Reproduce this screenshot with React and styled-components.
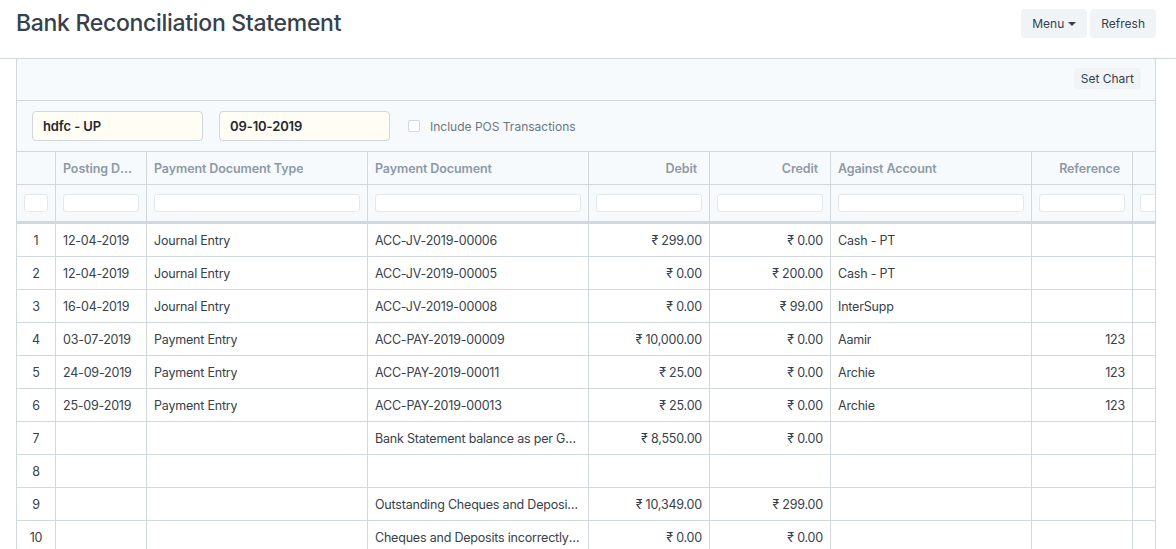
import styled, { createGlobalStyle } from "styled-components";

const GlobalStyle = createGlobalStyle`
  body {
    margin: 0;
    background: #fff;
    font-family: Inter, "Noto Sans", "DejaVu Sans", sans-serif;
    color: #36414c;
  }
`;

const COLS = "39px 91px 221px 221px 121px 121px 201px 101px 120px";

const columns = [
  { label: "", align: "center" },
  { label: "Posting Date" },
  { label: "Payment Document Type" },
  { label: "Payment Document" },
  { label: "Debit", align: "right" },
  { label: "Credit", align: "right" },
  { label: "Against Account" },
  { label: "Reference", align: "right" },
  { label: "" },
];

const rows = [
  ["1", "12-04-2019", "Journal Entry", "ACC-JV-2019-00006", "₹ 299.00", "₹ 0.00", "Cash - PT", ""],
  ["2", "12-04-2019", "Journal Entry", "ACC-JV-2019-00005", "₹ 0.00", "₹ 200.00", "Cash - PT", ""],
  ["3", "16-04-2019", "Journal Entry", "ACC-JV-2019-00008", "₹ 0.00", "₹ 99.00", "InterSupp", ""],
  ["4", "03-07-2019", "Payment Entry", "ACC-PAY-2019-00009", "₹ 10,000.00", "₹ 0.00", "Aamir", "123"],
  ["5", "24-09-2019", "Payment Entry", "ACC-PAY-2019-00011", "₹ 25.00", "₹ 0.00", "Archie", "123"],
  ["6", "25-09-2019", "Payment Entry", "ACC-PAY-2019-00013", "₹ 25.00", "₹ 0.00", "Archie", "123"],
  ["7", "", "", "Bank Statement balance as per General Ledger", "₹ 8,550.00", "₹ 0.00", "", ""],
  ["8", "", "", "", "", "", "", ""],
  ["9", "", "", "Outstanding Cheques and Deposits to clear", "₹ 10,349.00", "₹ 299.00", "", ""],
  ["10", "", "", "Cheques and Deposits incorrectly cleared", "₹ 0.00", "₹ 0.00", "", ""],
];

const PageHead = styled.header`
  display: flex;
  align-items: center;
  justify-content: space-between;
  padding: 9px 20px 20px 16px;
  border-bottom: 1px solid #d1d8dd;
`;

const Title = styled.h1`
  margin: 0;
  font-size: 23px;
  line-height: 29px;
  font-weight: 500;
  color: #36414c;
  letter-spacing: -0.3px;
`;

const Actions = styled.div`
  display: flex;
  gap: 3px;
`;

const Button = styled.button`
  display: flex;
  align-items: center;
  gap: 4px;
  height: ${({ small }) => (small ? "21px" : "29px")};
  padding: 0 ${({ small }) => (small ? "7px" : "11px")};
  border: none;
  border-radius: 4px;
  background: #f0f4f7;
  color: #36414c;
  font-family: inherit;
  font-size: 12px;
`;

const Caret = styled.span`
  width: 0;
  height: 0;
  border-left: 4px solid transparent;
  border-right: 4px solid transparent;
  border-top: 4px solid #36414c;
`;

const Report = styled.section`
  margin: 0 20px 0 16px;
  border-left: 1px solid #d1d8dd;
  border-right: 1px solid #d1d8dd;
  overflow: hidden;
`;

const Toolbar = styled.div`
  display: flex;
  justify-content: flex-end;
  align-items: center;
  height: 42px;
  padding: 0 14px 2px;
  background: #f7fafc;
  border-bottom: 1px solid #d1d8dd;
  box-sizing: border-box;
`;

const Filters = styled.div`
  display: flex;
  align-items: center;
  gap: 16px;
  height: 51px;
  padding: 0 15px;
  background: #f7fafc;
  border-bottom: 1px solid #d1d8dd;
  box-sizing: border-box;
`;

const FilterInput = styled.div`
  width: 171px;
  height: 30px;
  box-sizing: border-box;
  padding: 0 10px;
  display: flex;
  align-items: center;
  background: #fffdf4;
  border: 1px solid #d1d8dd;
  border-radius: 4px;
  font-size: 13px;
  font-weight: 600;
  color: #1f272e;
  letter-spacing: -0.1px;
`;

const CheckLabel = styled.label`
  display: flex;
  align-items: center;
  gap: 10px;
  margin-left: 2px;
  font-size: 12px;
  color: #6c7680;
`;

const Box = styled.span`
  width: 10px;
  height: 10px;
  border: 1px solid #d1d8dd;
  border-radius: 2px;
  background: #fff;
`;

const Row = styled.div`
  display: grid;
  grid-template-columns: ${COLS};
  height: ${({ h }) => h}px;
  background: ${({ head }) => (head ? "#f7fafc" : "#fff")};
  border-bottom: ${({ thick }) => (thick ? "3px" : "1px")} solid #d1d8dd;
  box-sizing: content-box;
`;

const Cell = styled.div`
  display: flex;
  align-items: center;
  justify-content: ${({ align }) =>
    align === "right" ? "flex-end" : align === "center" ? "center" : "flex-start"};
  padding: 0 ${({ head }) => (head ? "12px" : "7px")} 0 7px;
  border-right: 1px solid #d1d8dd;
  font-size: 12.5px;
  letter-spacing: ${({ head }) => (head ? "-0.1px" : "-0.2px")};
  font-weight: ${({ head }) => (head ? 600 : 400)};
  color: ${({ head }) => (head ? "#8d99a6" : "#36414c")};
  min-width: 0;
  overflow: hidden;
`;

const Text = styled.span`
  white-space: nowrap;
  overflow: hidden;
  text-overflow: ellipsis;
`;

const FilterBox = styled.div`
  width: 100%;
  height: 18px;
  box-sizing: border-box;
  background: #fff;
  border: 1px solid #e3e8ec;
  border-radius: 3px;
`;

const FilterCell = styled.div`
  display: flex;
  align-items: center;
  padding: 0 7px;
  border-right: 1px solid #d1d8dd;
`;

export default function App() {
  return (
    <>
      <GlobalStyle />
      <PageHead>
        <Title>Bank Reconciliation Statement</Title>
        <Actions>
          <Button>
            Menu <Caret />
          </Button>
          <Button>Refresh</Button>
        </Actions>
      </PageHead>
      <Report>
        <Toolbar>
          <Button small>Set Chart</Button>
        </Toolbar>
        <Filters>
          <FilterInput>hdfc - UP</FilterInput>
          <FilterInput>09-10-2019</FilterInput>
          <CheckLabel>
            <Box />
            Include POS Transactions
          </CheckLabel>
        </Filters>
        <Row head h={32}>
          {columns.map((c, i) => (
            <Cell head key={i} align={c.align}>
              <Text>{c.label}</Text>
            </Cell>
          ))}
        </Row>
        <Row head thick h={36}>
          {columns.map((c, i) => (
            <FilterCell key={i}>
              <FilterBox />
            </FilterCell>
          ))}
        </Row>
        {rows.map((r) => (
          <Row key={r[0]} h={32}>
            {columns.map((c, i) => (
              <Cell key={i} align={c.align}>
                <Text>{r[i] || ""}</Text>
              </Cell>
            ))}
          </Row>
        ))}
      </Report>
    </>
  );
}
